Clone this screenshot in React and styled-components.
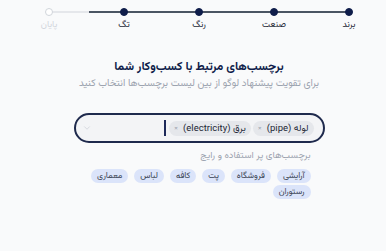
import React from "react";
import styled, { createGlobalStyle } from "styled-components";
import { ChevronDown } from "lucide-react";

const Global = createGlobalStyle`
  html, body { margin: 0; padding: 0; background: #f9fafb; }
  body { font-family: "Vazirmatn", "DejaVu Sans", "Noto Sans", sans-serif; }
  * { box-sizing: border-box; }
`;

const Page = styled.div`
  width: 386px;
  height: 251px;
  padding-left: 12px;
  direction: rtl;
  display: flex;
  flex-direction: column;
  align-items: center;
  overflow: hidden;
`;

const Stepper = styled.div`
  position: relative;
  display: grid;
  grid-template-columns: repeat(5, 75px);
  padding-top: 8px;
`;

const Track = styled.div`
  position: absolute;
  top: 11px;
  right: 37.5px;
  left: 37.5px;
  height: 2px;
  background: #e5e7eb;
`;

const Progress = styled.div`
  position: absolute;
  top: 0;
  right: 0;
  height: 2px;
  background: #4b5563;
`;

const Step = styled.div`
  position: relative;
  display: flex;
  flex-direction: column;
  align-items: center;
  gap: 3px;
`;

const Dot = styled.span`
  width: 8px;
  height: 8px;
  border-radius: 50%;
  background: ${(p) => (p.$done ? "#0f1d4a" : "#ffffff")};
  border: 1px solid ${(p) => (p.$done ? "#0f1d4a" : "#d1d5db")};
`;

const StepLabel = styled.span`
  font-size: 9px;
  line-height: 12px;
  color: ${(p) => (p.$done ? "#1f2937" : "#d1d5db")};
`;

const Title = styled.h1`
  margin: 28px 0 0;
  font-size: 12px;
  line-height: 16px;
  font-weight: 700;
  color: #0f1d4a;
`;

const Subtitle = styled.p`
  margin: 2px 0 0;
  font-size: 10px;
  line-height: 13px;
  color: #9ca3af;
`;

const Field = styled.div`
  margin-top: 23px;
  width: 251px;
  height: 30px;
  border: 2px solid #1f2a4d;
  border-radius: 15px;
  background: #f3f4f6;
  display: flex;
  align-items: center;
  padding: 0 9px 0 6px;
  gap: 2px;
`;

const Tag = styled.span`
  display: inline-flex;
  align-items: center;
  gap: 5px;
  height: 15px;
  padding: 0 5px;
  border-radius: 8px;
  background: #e5e7eb;
  color: #1f2937;
  font-size: 9.5px;
  white-space: nowrap;
`;

const Remove = styled.span`
  color: #9ca3af;
  font-size: 8px;
`;

const Caret = styled.span`
  width: 2px;
  height: 16px;
  margin-right: 1px;
  background: #1e2a5a;
`;

const Chevron = styled.span`
  margin-right: auto;
  display: flex;
  color: #c4c8d0;
`;

const Suggest = styled.div`
  width: 251px;
  padding: 7px 14px 0;
`;

const SuggestLabel = styled.div`
  font-size: 9.5px;
  line-height: 12px;
  color: #9ca3af;
`;

const Chips = styled.div`
  margin-top: 7px;
  display: flex;
  flex-wrap: wrap;
  gap: 2px 6px;
`;

const Chip = styled.span`
  height: 14px;
  padding: 0 6px;
  border-radius: 7px;
  background: #dbe4fa;
  color: #374151;
  font-size: 8.5px;
  line-height: 14px;
  white-space: nowrap;
`;

const steps = [
  { label: "برند", done: true },
  { label: "صنعت", done: true },
  { label: "رنگ", done: true },
  { label: "تگ", done: true },
  { label: "پایان", done: false },
];

const selected = ["لوله (pipe)", "برق (electricity)"];
const popular = ["آرایشی", "فروشگاه", "پت", "کافه", "لباس", "معماری", "رستوران"];

export default function App() {
  return (
    <>
      <Global />
      <Page>
        <Stepper>
          <Track>
            <Progress style={{ width: "260px" }} />
          </Track>
          {steps.map((s) => (
            <Step key={s.label}>
              <Dot $done={s.done} />
              <StepLabel $done={s.done}>{s.label}</StepLabel>
            </Step>
          ))}
        </Stepper>
        <Title>برچسب‌های مرتبط با کسب‌وکار شما</Title>
        <Subtitle>برای تقویت پیشنهاد لوگو از بین لیست برچسب‌ها انتخاب کنید</Subtitle>
        <Field>
          {selected.map((t) => (
            <Tag key={t}>
              {t}
              <Remove>×</Remove>
            </Tag>
          ))}
          <Caret />
          <Chevron>
            <ChevronDown size={10} strokeWidth={1.5} />
          </Chevron>
        </Field>
        <Suggest>
          <SuggestLabel>برچسب‌های پر استفاده و رایج</SuggestLabel>
          <Chips>
            {popular.map((c) => (
              <Chip key={c}>{c}</Chip>
            ))}
          </Chips>
        </Suggest>
      </Page>
    </>
  );
}
